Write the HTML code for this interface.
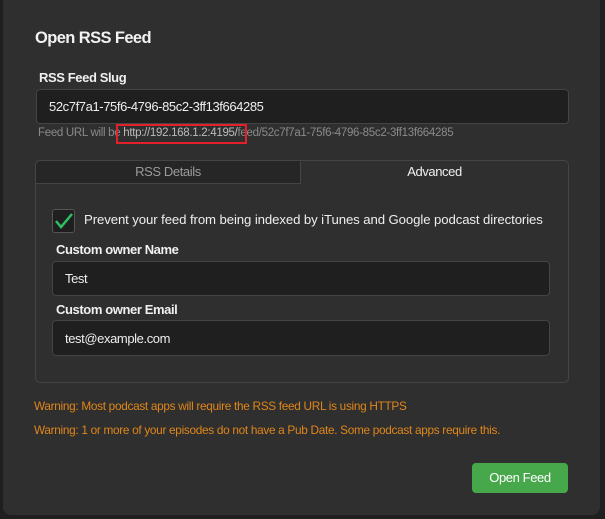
<!DOCTYPE html>
<html><head><style>
*{box-sizing:border-box;margin:0;padding:0}
body{width:605px;height:519px;background:#1f1f1f;font-family:"Liberation Sans",sans-serif;color:#eee;position:relative;overflow:hidden;letter-spacing:-0.4px}
.modal{position:absolute;left:3px;top:-6px;width:597px;height:521px;background:#2f2f2f;border-radius:8px}
.a{position:absolute;white-space:nowrap}
.title{left:35px;top:29px;font-size:16.5px;font-weight:bold;color:#f2f2f2;letter-spacing:-0.6px}
.lbl{font-size:13px;font-weight:bold;color:#f0f0f0}
.inp{background:#1f1f1f;border:1px solid #444;border-radius:4px;font-size:13px;color:#eee;padding-left:12px;display:flex;align-items:center}
.help{font-size:11.5px;color:#8a8a8a;letter-spacing:-0.3px}
.warn{font-size:11.8px;color:#e0861a;letter-spacing:-0.3px}
</style></head><body>
<div class="modal"></div>
<div class="a title">Open RSS Feed</div>
<div class="a lbl" style="left:39px;top:70px">RSS Feed Slug</div>
<div class="a inp" style="left:36px;top:89px;width:533px;height:35px">52c7f7a1-75f6-4796-85c2-3ff13f664285</div>
<div class="a help" style="left:38px;top:127px">Feed URL will be <span style="color:#bbb">http://192.168.1.2:4195/</span>feed/52c7f7a1-75f6-4796-85c2-3ff13f664285</div>
<div class="a" style="left:116px;top:124px;width:131px;height:20px;border:2px solid #e4202a"></div>
<div class="a" style="left:35px;top:160px;width:534px;height:223px;border:1px solid #444;border-radius:5px"></div>
<div class="a" style="left:36px;top:161px;width:265px;height:23px;background:#262626;border-right:1px solid #444;border-bottom:1px solid #444;border-top-left-radius:5px;font-size:13px;color:#9a9a9a;text-align:center;line-height:22px">RSS Details</div>
<div class="a" style="left:301px;top:161px;width:267px;height:23px;font-size:13px;color:#f0f0f0;text-align:center;line-height:22px">Advanced</div>
<div class="a" style="left:52px;top:209px;width:23px;height:24px;background:#1f1f1f;border:1px solid #555;border-radius:3px"></div>
<svg class="a" style="left:54px;top:212px" width="20" height="18" viewBox="0 0 20 18"><path d="M2 9 L7 15 L18 2" fill="none" stroke="#2fbf60" stroke-width="2.5"/></svg>
<div class="a" style="left:84px;top:212px;font-size:13.2px;color:#eee;letter-spacing:-0.1px">Prevent your feed from being indexed by iTunes and Google podcast directories</div>
<div class="a lbl" style="left:56px;top:242px">Custom owner Name</div>
<div class="a inp" style="left:52px;top:261px;width:498px;height:35px">Test</div>
<div class="a lbl" style="left:56px;top:302px">Custom owner Email</div>
<div class="a inp" style="left:52px;top:320px;width:498px;height:36px">test@example.com</div>
<div class="a warn" style="left:34px;top:399px">Warning: Most podcast apps will require the RSS feed URL is using HTTPS</div>
<div class="a warn" style="left:34px;top:423px">Warning: 1 or more of your episodes do not have a Pub Date. Some podcast apps require this.</div>
<div class="a" style="left:472px;top:463px;width:96px;height:30px;background:#47a84b;border-radius:4px;font-size:13px;color:#fff;text-align:center;line-height:30px">Open Feed</div>
</body></html>
